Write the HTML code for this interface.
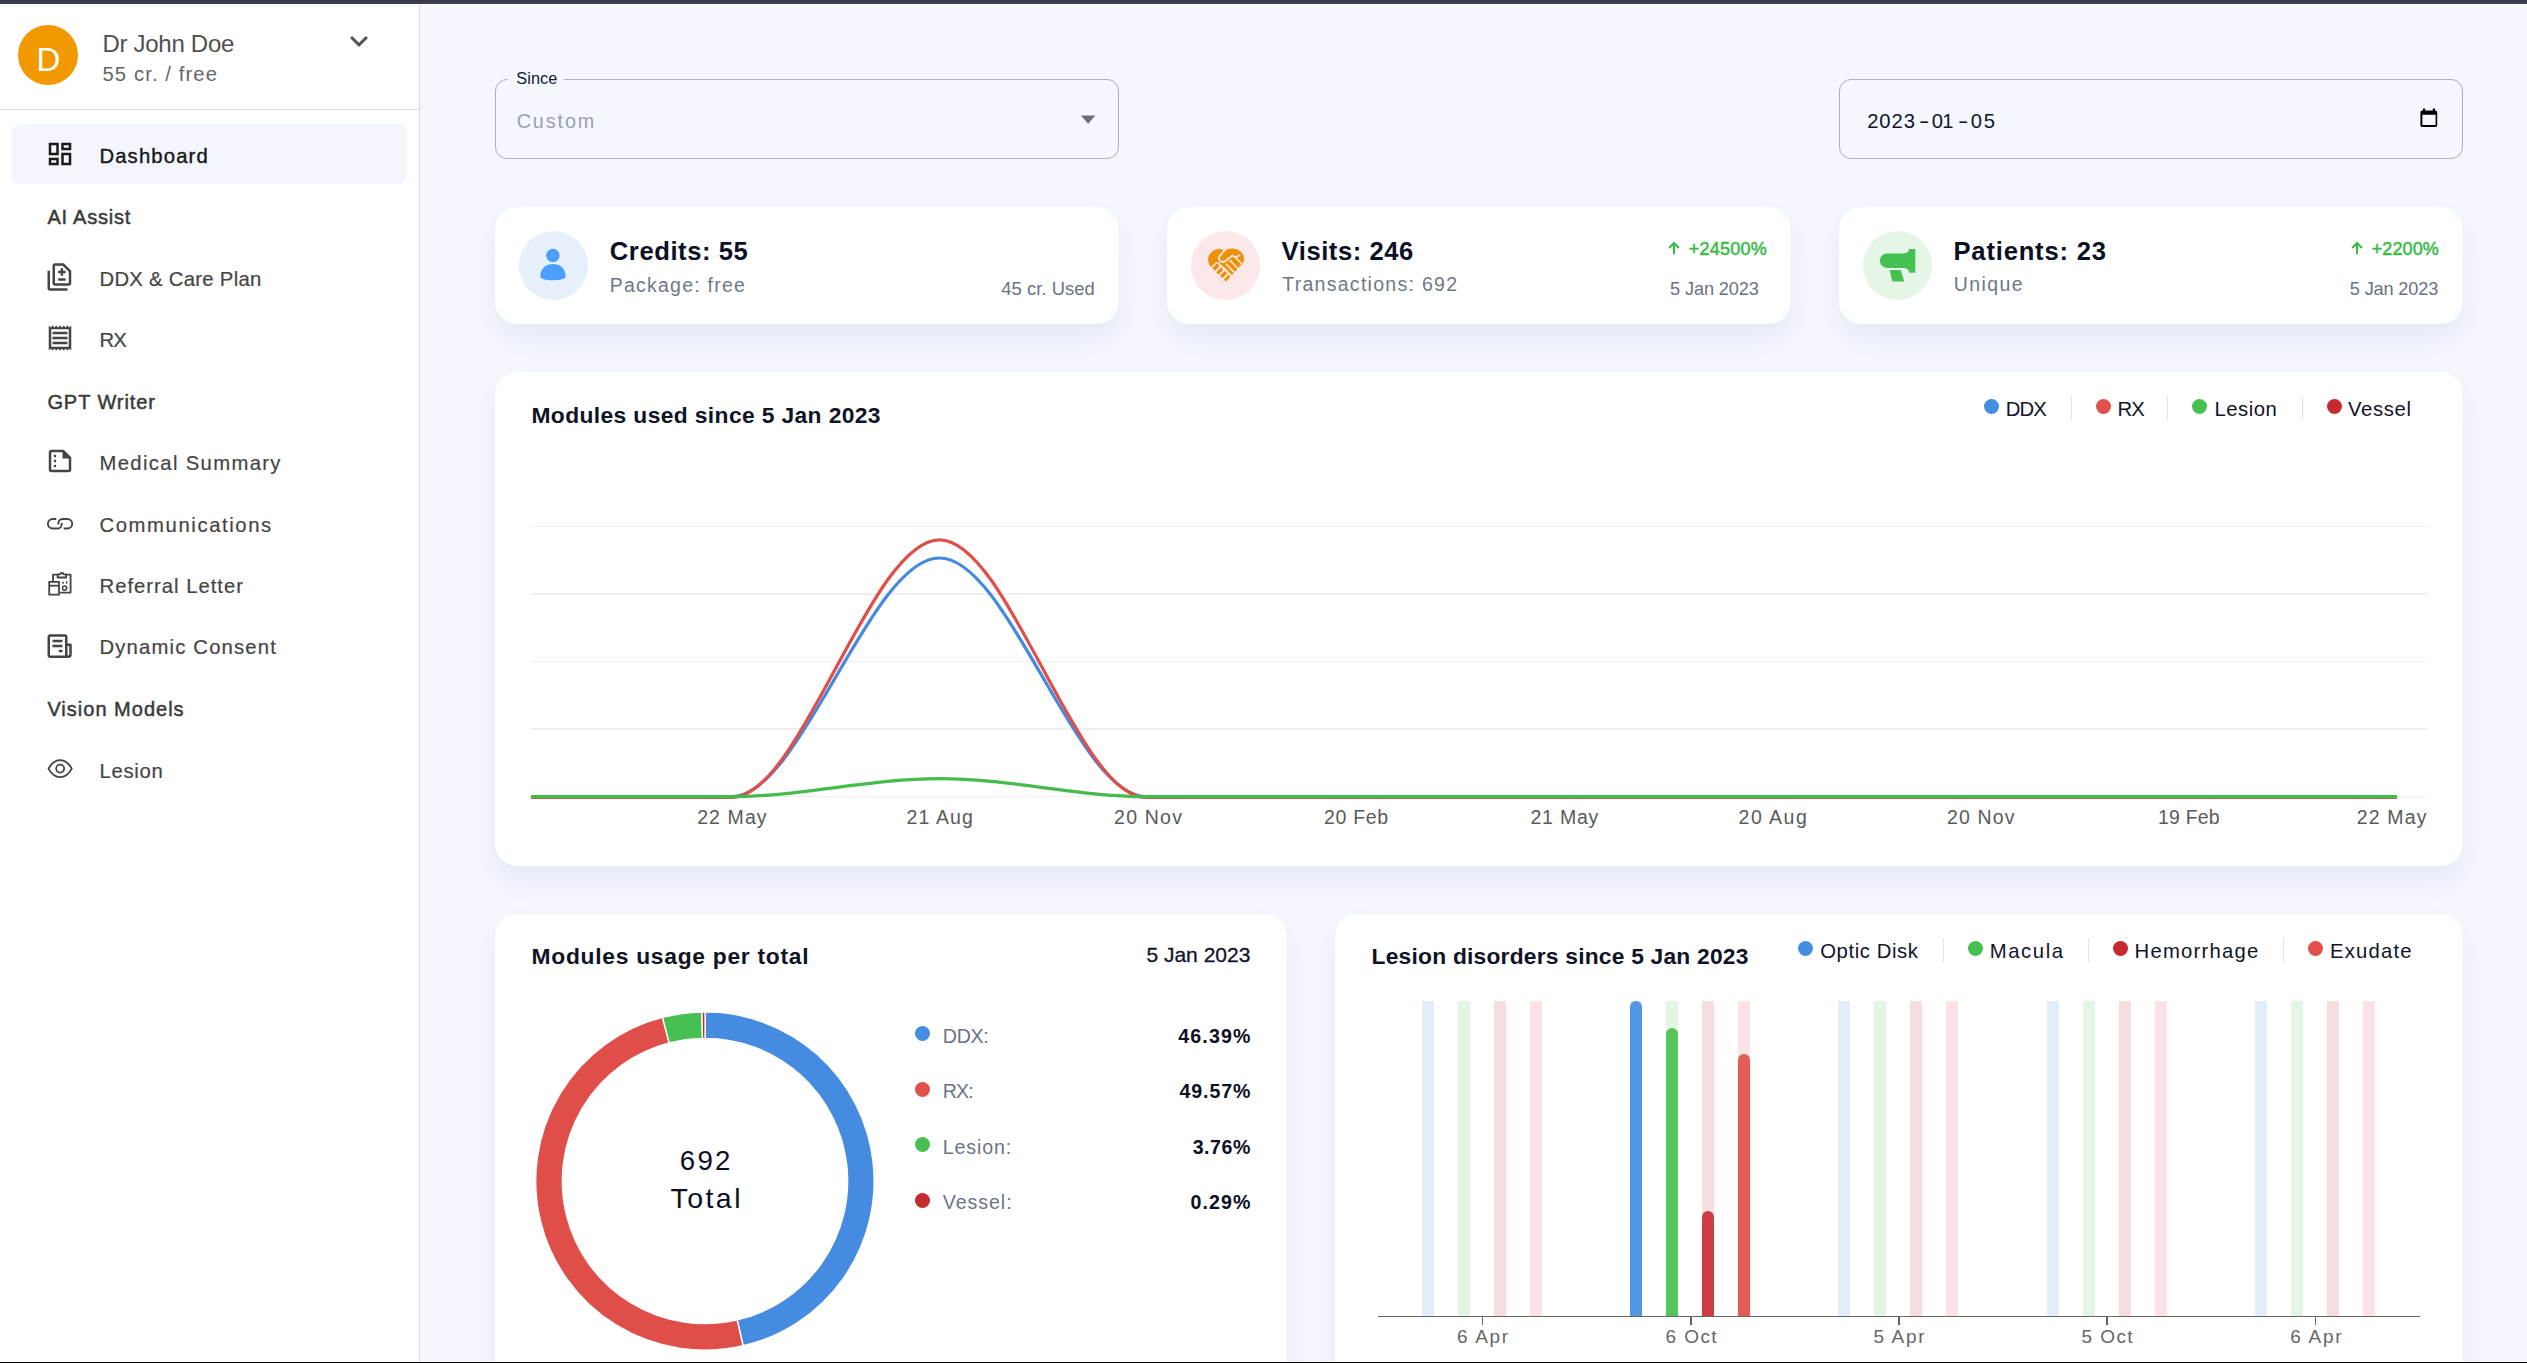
<!DOCTYPE html>
<html lang="en"><head><meta charset="utf-8"><title>Dashboard</title>
<style>
html,body{margin:0;padding:0;}
body{width:2527px;height:1363px;overflow:hidden;background:#f4f7fe;font-family:"Liberation Sans",sans-serif;}
#root{position:relative;width:2527px;height:1363px;overflow:hidden;background:#f4f7fe;}
#root div,#root svg{position:absolute;}
.t{white-space:pre;}
.card{background:#fff;border-radius:22.5px;box-shadow:0 14px 28px rgba(20,25,80,0.065);}
.dot{width:15px;height:15px;border-radius:50%;}
.sep{width:1.5px;height:24px;background:#e3e3e3;}
.grid{left:531px;width:1896px;height:1.5px;background:#efefef;}
.bb{width:12px;top:1001px;height:315px;}
.db{width:12px;border-radius:6px 6px 0 0;}

</style></head>
<body>
<div id="root">
<div style="left:0;top:0;width:2527px;height:5px;background:#fff"></div>
<div style="left:0;top:5px;width:419px;height:1358px;background:#fff"></div>
<div style="left:419px;top:4px;width:1px;height:1359px;background:#d9dae0"></div>
<div style="left:0;top:0;width:2527px;height:2px;background:#363a4e"></div>
<div style="left:0;top:2px;width:2527px;height:1px;background:#45464f"></div>
<div style="left:0;top:3px;width:2527px;height:1px;background:#383a42"></div>
<div style="left:18px;top:25px;width:60px;height:60px;border-radius:50%;background:#f29900"></div>
<svg style="left:341px;top:23px" width="36" height="36" viewBox="0 0 24 24"><path fill="#555" d="M16.59 8.59 12 13.17 7.41 8.59 6 10l6 6 6-6z"/></svg>
<div style="left:0;top:109px;width:419px;height:1px;background:#dcdcdc"></div>
<div style="left:12px;top:124px;width:395px;height:60px;border-radius:7px;background:#f4f6fd"></div>
<svg style="left:45px;top:139px" width="30" height="30" viewBox="0 0 24 24" fill="#1a1a1a"><path d="M19 5v2h-4V5h4M9 5v6H5V5h4m10 8v6h-4v-6h4M9 17v2H5v-2h4M21 3h-8v6h8V3zM11 3H3v10h8V3zm10 8h-8v10h8V11zm-10 4H3v6h8v-6z"/></svg>
<svg style="left:45px;top:261.6px" width="30" height="30" viewBox="0 0 24 24" fill="#444"><path d="M18 23H4c-1.1 0-2-.9-2-2V7h2v14h14v2zM14.5 7V5h-2v2h-2v2h2v2h2V9h2V7h-2zm2 6h-6v2h6v-2zM15 1H8c-1.1 0-1.99.9-1.99 2L6 17c0 1.1.89 2 1.99 2H19c1.1 0 2-.9 2-2V7l-6-6zm4 16H8V3h6.17L19 7.83V17z"/></svg>
<svg style="left:45px;top:322.5px" width="30" height="30" viewBox="0 0 24 24" fill="#444"><path d="M19.5 3.5 18 2l-1.5 1.5L15 2l-1.5 1.5L12 2l-1.5 1.5L9 2 7.5 3.5 6 2 4.5 3.5 3 2v20l1.5-1.5L6 22l1.5-1.5L9 22l1.5-1.5L12 22l1.5-1.5L15 22l1.5-1.5L18 22l1.5-1.5L21 22V2l-1.5 1.5zM19 19.09H5V4.91h14v14.18zM6 15h12v2H6zm0-4h12v2H6zm0-4h12v2H6z"/></svg>
<svg style="left:45px;top:446px" width="30" height="30" viewBox="0 0 24 24" fill="#444"><path d="M15 3H5c-1.1 0-1.99.9-1.99 2L3 19c0 1.1.89 2 1.99 2H19c1.1 0 2-.9 2-2V9l-6-6zM5 19V5h9v5h5v9H5zM9 8c0 .55-.45 1-1 1s-1-.45-1-1 .45-1 1-1 1 .45 1 1zm0 4c0 .55-.45 1-1 1s-1-.45-1-1 .45-1 1-1 1 .45 1 1zm0 4c0 .55-.45 1-1 1s-1-.45-1-1 .45-1 1-1 1 .45 1 1z"/></svg>
<svg style="left:45px;top:631px" width="30" height="30" viewBox="0 0 24 24" fill="#444"><g fill="none" stroke="#444" stroke-width="2" stroke-linejoin="round"><path d="M17.5 20.5H4.2a1.2 1.2 0 0 1-1.2-1.2V4.7a1.2 1.2 0 0 1 1.2-1.2h11.6A1.2 1.2 0 0 1 17 4.7v14.1a1.7 1.7 0 0 0 3.4 0V11H17"/></g><rect x="6" y="7" width="8" height="2"/><rect x="6" y="11" width="8" height="2"/><rect x="11" y="15" width="3" height="2"/></svg>
<div style="left:495px;top:79px;width:622px;height:77.5px;border:1px solid #aeb0b8;border-radius:12px"></div>
<div style="left:508px;top:78px;width:55.5px;height:4px;background:#f4f7fe"></div>
<svg style="left:1076px;top:111px" width="24" height="16" viewBox="0 0 24 16"><path fill="#6f6f73" d="M4.9 4.6h14.5l-7.25 8.1z"/></svg>
<div style="left:1839px;top:79px;width:622px;height:77.5px;border:1px solid #aeb0b8;border-radius:12px"></div>

<svg style="left:2418px;top:106px" width="22" height="24" viewBox="0 0 22 24"><path fill="#000" fill-rule="evenodd" d="M5 2.6h2.2v2H14.8v-2H17v2h0.4a1.8 1.8 0 0 1 1.8 1.800v12.900a1.800 1.800 0 0 1-1.800 1.800H4.200a1.800 1.800 0 0 1-1.800-1.800V6.400a1.800 1.800 0 0 1 1.800-1.800H5zM4.400 8.800v10.200h13.200V8.800z"/></svg>
<div class="card" style="left:495px;top:207px;width:624px;height:117px"></div>
<div class="card" style="left:1167px;top:207px;width:624px;height:117px"></div>
<div class="card" style="left:1839px;top:207px;width:624px;height:117px"></div>
<div style="left:519px;top:231px;width:69px;height:69px;border-radius:50%;background:#e6f0fb"></div>
<svg style="left:519px;top:231px" width="69" height="69" viewBox="519 231 69 69"><circle cx="552.9" cy="255.5" r="6.7" fill="#4d9fff"/><path fill="#4d9fff" d="M540.3 276.3C540.6 268.500 545.600 264.100 552.950 264.100C560.300 264.100 565.300 268.500 565.600 276.300C565.700 279.200 560.200 280.300 552.950 280.300C545.700 280.300 540.200 279.200 540.300 276.300Z"/></svg>
<div style="left:1191px;top:231px;width:69px;height:69px;border-radius:50%;background:#fce8e8"></div>
<svg style="left:1200px;top:240px" width="52" height="50" viewBox="0 0 1418 1363"><path fill="#ed9106" d="M705 1140L300 735C190 600 190 430 330 320C430 235 570 215 660 300C760 215 960 200 1090 300C1230 410 1230 560 1150 650Z"/><g fill="none" stroke="#fce8e8" stroke-linecap="round" stroke-linejoin="round"><path stroke-width="50" d="M672 285L540 430C490 490 520 580 600 600C660 610 700 570 740 540L880 425L960 470L1075 420"/><path stroke-width="42" d="M985 490L1135 645"/><path stroke-width="42" d="M820 560L1060 810"/><path stroke-width="42" d="M720 660L960 910"/><path stroke-width="62" d="M560 700L640 765L880 1010"/><path stroke-width="52" d="M370 920L545 735"/><path stroke-width="52" d="M470 1020L645 835"/><path stroke-width="52" d="M580 1110L750 935"/><path stroke-width="44" d="M290 780L430 640C470 610 520 630 550 700"/><path stroke-width="70" d="M1140 740L800 1100"/></g></svg>
<div style="left:1863px;top:231px;width:69px;height:69px;border-radius:50%;background:#e5f6e6"></div>
<svg style="left:1870px;top:240px" width="56" height="50" viewBox="0 0 1527 1363"><path fill="#45c151" d="M1065 245H1235V895H1065C1065 800 1000 760 900 760H467A197.500 197.500 0 0 1 467 365H900C1000 365 1065 320 1065 245Z"/><path fill="#45c151" d="M535 820H835L935 1130H610Z"/></svg>
<svg style="left:1666.4px;top:240px" width="16" height="16" viewBox="0 0 16 16"><g fill="none" stroke="#3dbb4a" stroke-width="2.100" stroke-linecap="butt"><path d="M8 14.300V3.200"/><path d="M3.100 7.900L8 3L12.900 7.900"/></g></svg>
<svg style="left:2349.4px;top:240px" width="16" height="16" viewBox="0 0 16 16"><g fill="none" stroke="#3dbb4a" stroke-width="2.100" stroke-linecap="butt"><path d="M8 14.300V3.200"/><path d="M3.100 7.900L8 3L12.900 7.900"/></g></svg>
<div class="card" style="left:495px;top:372px;width:1968px;height:493.500px"></div>
<div class="grid" style="top:525.75px"></div>
<div class="grid" style="top:593.25px"></div>
<div class="grid" style="top:660.75px"></div>
<div class="grid" style="top:728.25px"></div>
<div class="grid" style="top:795.75px"></div>
<div class="dot" style="left:1984.1px;top:398.8px;background:#458de0"></div>
<div class="dot" style="left:2095.9px;top:398.8px;background:#e2504c"></div>
<div class="dot" style="left:2191.9px;top:398.8px;background:#46c050"></div>
<div class="dot" style="left:2327.0px;top:398.8px;background:#c62a2f"></div>
<div class="sep" style="left:2070.55px;top:396px"></div>
<div class="sep" style="left:2166.65px;top:396px"></div>
<div class="sep" style="left:2301.65px;top:396px"></div>
<svg style="left:0;top:500px" width="2527" height="320" viewBox="0 500 2527 320"><g fill="none" stroke-width="3.2" stroke-linejoin="round"><path stroke="#4489e0" d="M531 796.6L731.7 796.6C801.0 796.6 870.2 558 939.5 558C1008.3 558 1077.2 796.6 1146 796.6L2397 796.6"/><path stroke="#e04e4a" d="M531 797.4L731.7 797.4C801.0 797.4 870.2 539.8 939.5 539.8C1008.3 539.8 1077.2 797.4 1146 797.4L2397 797.4"/><path stroke="#44bb4c" d="M531 796.6L731.7 796.6C801.0 796.6 870.2 778.6 939.5 778.6C1008.3 778.6 1077.2 796.6 1146 796.6L2397 796.6"/></g></svg>
<div class="card" style="left:495px;top:914px;width:792px;height:520px"></div>
<svg style="left:520px;top:1000px" width="380" height="363" viewBox="520 1000 380 363"><path fill="#458be0" stroke="#fff" stroke-width="1.4" d="M705.05 1011.90A169.1 169.1 0 0 1 743.13 1345.76L737.16 1319.94A142.6 142.6 0 0 0 705.05 1038.40Z"/><path fill="#e04e4a" stroke="#fff" stroke-width="1.4" d="M743.13 1345.76A169.1 169.1 0 0 1 662.49 1017.34L669.16 1042.99A142.6 142.6 0 0 0 737.16 1319.94Z"/><path fill="#46c050" stroke="#fff" stroke-width="1.4" d="M662.49 1017.34A169.1 169.1 0 0 1 701.97 1011.93L702.45 1038.42A142.6 142.6 0 0 0 669.16 1042.99Z"/><path fill="#c62a2f" stroke="#fff" stroke-width="1.4" d="M701.97 1011.93A169.1 169.1 0 0 1 705.05 1011.90L705.05 1038.40A142.6 142.6 0 0 0 702.45 1038.42Z"/></svg>
<div class="dot" style="left:915px;top:1025.9px;background:#458de0"></div>
<div class="dot" style="left:915px;top:1081.9px;background:#e2504c"></div>
<div class="dot" style="left:915px;top:1137.1px;background:#46c050"></div>
<div class="dot" style="left:915px;top:1193.0px;background:#c62a2f"></div>
<div class="card" style="left:1335px;top:914px;width:1128px;height:520px"></div>
<div class="dot" style="left:1798.1px;top:941.0px;background:#458de0"></div>
<div class="dot" style="left:1967.9px;top:941.0px;background:#46c050"></div>
<div class="dot" style="left:2112.8px;top:941.0px;background:#c62a2f"></div>
<div class="dot" style="left:2307.8px;top:941.0px;background:#e2504c"></div>
<div class="sep" style="left:1942.65px;top:938.300px"></div>
<div class="sep" style="left:2087.55px;top:938.300px"></div>
<div class="sep" style="left:2282.55px;top:938.300px"></div>
<div class="bb" style="left:1422.0px;background:#e3edf9"></div>
<div class="bb" style="left:1458.0px;background:#e3f5e4"></div>
<div class="bb" style="left:1494.0px;background:#f7dede"></div>
<div class="bb" style="left:1530.0px;background:#fce3e3"></div>
<div class="bb" style="left:1630.2px;background:#e3edf9"></div>
<div class="bb" style="left:1666.2px;background:#e3f5e4"></div>
<div class="bb" style="left:1702.2px;background:#f7dede"></div>
<div class="bb" style="left:1738.2px;background:#fce3e3"></div>
<div class="bb" style="left:1838.4px;background:#e3edf9"></div>
<div class="bb" style="left:1874.4px;background:#e3f5e4"></div>
<div class="bb" style="left:1910.4px;background:#f7dede"></div>
<div class="bb" style="left:1946.4px;background:#fce3e3"></div>
<div class="bb" style="left:2046.6px;background:#e3edf9"></div>
<div class="bb" style="left:2082.6px;background:#e3f5e4"></div>
<div class="bb" style="left:2118.6px;background:#f7dede"></div>
<div class="bb" style="left:2154.6px;background:#fce3e3"></div>
<div class="bb" style="left:2254.8px;background:#e3edf9"></div>
<div class="bb" style="left:2290.8px;background:#e3f5e4"></div>
<div class="bb" style="left:2326.8px;background:#f7dede"></div>
<div class="bb" style="left:2362.8px;background:#fce3e3"></div>
<div class="db" style="left:1630.2px;top:1001px;height:315.0px;background:#5596e2"></div>
<div class="db" style="left:1666.2px;top:1027.8px;height:288.2px;background:#56c65c"></div>
<div class="db" style="left:1702.2px;top:1211.3px;height:104.7px;background:#cc3c42"></div>
<div class="db" style="left:1738.2px;top:1053.9px;height:262.1px;background:#e45c58"></div>
<div style="left:1378.300px;top:1315.700px;width:1041.500px;height:1.600px;background:#666"></div>
<div style="left:1481.7px;top:1316px;width:1.600px;height:9px;background:#666"></div>
<div style="left:1690.0px;top:1316px;width:1.600px;height:9px;background:#666"></div>
<div style="left:1898.1000000000001px;top:1316px;width:1.600px;height:9px;background:#666"></div>
<div style="left:2106.2999999999997px;top:1316px;width:1.600px;height:9px;background:#666"></div>
<div style="left:2314.6px;top:1316px;width:1.600px;height:9px;background:#666"></div>
<div style="left:0;top:1361.500px;width:2527px;height:1.500px;background:#000"></div>
<svg style="left:40px;top:505px" width="40" height="40" viewBox="40 505 40 40"><g fill="none" stroke="#444" stroke-width="1.85" stroke-linecap="butt"><path d="M56.300 519H52.650A4.750 4.750 0 0 0 52.650 528.500H57.400A4.300 4.300 0 0 0 61.700 524.200V523"/><path d="M63.700 528.500H67.450A4.750 4.750 0 0 0 67.450 519H62.600A4.300 4.300 0 0 0 58.300 523.300V524.500"/></g></svg>
<svg style="left:40px;top:565px" width="40" height="40" viewBox="40 565 40 40"><g fill="none" stroke="#444" stroke-width="1.800" stroke-linejoin="round"><path d="M53 581V574.700H57.600"/><path d="M66.200 574.700H70.600V592.600H60.200"/><path d="M57.600 577.500V574.300H60.100C60.300 572.600 63.500 572.600 63.700 574.300H66.200V577.500Z"/><path d="M49.200 581.800H59V594.700H49.200Z"/><path d="M49.200 585.700H59"/><circle cx="64.600" cy="588.100" r="2.100" stroke-width="1.500"/></g><rect x="62.200" y="581.900" width="1.700" height="1.700" fill="#444"/><rect x="66" y="581.200" width="1.300" height="2.500" fill="#444"/></svg>
<svg style="left:40px;top:750px" width="40" height="40" viewBox="40 750 40 40"><g fill="none" stroke="#444" stroke-width="1.800" stroke-linejoin="round"><path d="M48.500 768.600C52 762.300 56 760.100 60.150 760.100C64.300 760.100 68.300 762.300 71.800 768.600C68.300 774.900 64.300 777.100 60.150 777.100C56 777.100 52 774.900 48.500 768.600Z"/><circle cx="60.150" cy="768.600" r="4"/></g></svg>
<div class="t" style="left:1918.60px;top:111px;font-size:20px;line-height:20px;color:#10142a;transform:scaleX(1.55);transform-origin:0 0">-</div>
<div class="t" style="left:1957.50px;top:111px;font-size:20px;line-height:20px;color:#10142a;transform:scaleX(1.55);transform-origin:0 0">-</div>
<div class="t" style="top:43.00px;font-size:33px;line-height:33px;color:#ffffff;left:-51.70px;width:200px;text-align:center;">D</div>
<div class="t" style="top:32.00px;font-size:24px;line-height:24px;color:#505050;letter-spacing:-0.293px;left:102.50px;">Dr John Doe</div>
<div class="t" style="top:64.00px;font-size:20.3px;line-height:20.3px;color:#666666;letter-spacing:1.086px;left:102.50px;">55 cr. / free</div>
<div class="t" style="top:146.00px;font-size:20.3px;line-height:20.3px;color:#151515;letter-spacing:1.148px;-webkit-text-stroke:0.35px #151515;left:99.40px;">Dashboard</div>
<div class="t" style="top:207.00px;font-size:20px;line-height:20px;color:#3a3a3a;letter-spacing:0.787px;-webkit-text-stroke:0.5px #3a3a3a;left:47.40px;">AI Assist</div>
<div class="t" style="top:269.00px;font-size:20.3px;line-height:20.3px;color:#454545;letter-spacing:0.285px;-webkit-text-stroke:0.2px #454545;left:99.50px;">DDX &amp; Care Plan</div>
<div class="t" style="top:330.00px;font-size:20.3px;line-height:20.3px;color:#454545;letter-spacing:-0.900px;-webkit-text-stroke:0.2px #454545;left:99.50px;">RX</div>
<div class="t" style="top:392.00px;font-size:20px;line-height:20px;color:#3a3a3a;letter-spacing:0.924px;-webkit-text-stroke:0.5px #3a3a3a;left:47.40px;">GPT Writer</div>
<div class="t" style="top:453.00px;font-size:20.3px;line-height:20.3px;color:#454545;letter-spacing:1.336px;-webkit-text-stroke:0.2px #454545;left:99.50px;">Medical Summary</div>
<div class="t" style="top:515.00px;font-size:20.3px;line-height:20.3px;color:#454545;letter-spacing:1.589px;-webkit-text-stroke:0.2px #454545;left:99.50px;">Communications</div>
<div class="t" style="top:576.00px;font-size:20.3px;line-height:20.3px;color:#454545;letter-spacing:0.990px;-webkit-text-stroke:0.2px #454545;left:99.50px;">Referral Letter</div>
<div class="t" style="top:637.00px;font-size:20.3px;line-height:20.3px;color:#454545;letter-spacing:1.167px;-webkit-text-stroke:0.2px #454545;left:99.50px;">Dynamic Consent</div>
<div class="t" style="top:699.00px;font-size:20px;line-height:20px;color:#3a3a3a;letter-spacing:1.005px;-webkit-text-stroke:0.5px #3a3a3a;left:47.40px;">Vision Models</div>
<div class="t" style="top:761.00px;font-size:20.3px;line-height:20.3px;color:#454545;letter-spacing:0.687px;-webkit-text-stroke:0.2px #454545;left:99.50px;">Lesion</div>
<div class="t" style="top:70.00px;font-size:16.3px;line-height:16.3px;color:#111936;letter-spacing:0.066px;left:516.30px;">Since</div>
<div class="t" style="top:112.00px;font-size:19.8px;line-height:19.8px;color:#9a9fae;letter-spacing:1.889px;left:516.70px;">Custom</div>
<div class="t" style="top:111.00px;font-size:20.2px;line-height:20.2px;color:#10142a;letter-spacing:0.959px;left:1867.20px;">2023</div>
<div class="t" style="top:111.00px;font-size:20.2px;line-height:20.2px;color:#10142a;letter-spacing:-0.669px;left:1931.80px;">01</div>
<div class="t" style="top:111.00px;font-size:20.2px;line-height:20.2px;color:#10142a;letter-spacing:1.931px;left:1970.70px;">05</div>
<div class="t" style="top:239.00px;font-size:25.6px;line-height:25.6px;color:#0c1024;font-weight:700;letter-spacing:0.572px;left:609.80px;">Credits: 55</div>
<div class="t" style="top:276.00px;font-size:19.5px;line-height:19.5px;color:#707887;letter-spacing:1.223px;left:609.80px;">Package: free</div>
<div class="t" style="top:280.00px;font-size:18.4px;line-height:18.4px;color:#6b7280;letter-spacing:0.057px;left:1001.20px;">45 cr. Used</div>
<div class="t" style="top:239.00px;font-size:25.6px;line-height:25.6px;color:#0c1024;font-weight:700;letter-spacing:0.553px;left:1281.60px;">Visits: 246</div>
<div class="t" style="top:275.00px;font-size:19.5px;line-height:19.5px;color:#707887;letter-spacing:1.282px;left:1282.20px;">Transactions: 692</div>
<div class="t" style="top:240.00px;font-size:18px;line-height:18px;color:#3dbb4a;letter-spacing:0.237px;-webkit-text-stroke:0.55px #3dbb4a;left:1688.70px;">+24500%</div>
<div class="t" style="top:280.00px;font-size:18.2px;line-height:18.2px;color:#6b7280;letter-spacing:-0.113px;left:1670.00px;">5 Jan 2023</div>
<div class="t" style="top:239.00px;font-size:25.6px;line-height:25.6px;color:#0c1024;font-weight:700;letter-spacing:0.803px;left:1953.50px;">Patients: 23</div>
<div class="t" style="top:275.00px;font-size:19.5px;line-height:19.5px;color:#707887;letter-spacing:1.421px;left:1953.80px;">Unique</div>
<div class="t" style="top:240.00px;font-size:18px;line-height:18px;color:#3dbb4a;letter-spacing:0.107px;-webkit-text-stroke:0.55px #3dbb4a;left:2371.70px;">+2200%</div>
<div class="t" style="top:280.00px;font-size:18.2px;line-height:18.2px;color:#6b7280;letter-spacing:-0.168px;left:2349.80px;">5 Jan 2023</div>
<div class="t" style="top:404.00px;font-size:22.8px;line-height:22.8px;color:#0f1324;font-weight:700;letter-spacing:0.382px;left:531.50px;">Modules used since 5 Jan 2023</div>
<div class="t" style="top:399.00px;font-size:20.3px;line-height:20.3px;color:#10142a;letter-spacing:-0.900px;left:2005.70px;">DDX</div>
<div class="t" style="top:399.00px;font-size:20.3px;line-height:20.3px;color:#10142a;letter-spacing:-0.900px;left:2117.40px;">RX</div>
<div class="t" style="top:399.00px;font-size:20.3px;line-height:20.3px;color:#10142a;letter-spacing:0.527px;left:2214.50px;">Lesion</div>
<div class="t" style="top:399.00px;font-size:20.3px;line-height:20.3px;color:#10142a;letter-spacing:0.687px;left:2347.90px;">Vessel</div>
<div class="t" style="top:808.00px;font-size:19.5px;line-height:19.5px;color:#5a5a5a;letter-spacing:1.089px;left:697.20px;">22 May</div>
<div class="t" style="top:808.00px;font-size:19.5px;line-height:19.5px;color:#5a5a5a;letter-spacing:1.093px;left:906.60px;">21 Aug</div>
<div class="t" style="top:808.00px;font-size:19.5px;line-height:19.5px;color:#5a5a5a;letter-spacing:1.201px;left:1114.10px;">20 Nov</div>
<div class="t" style="top:808.00px;font-size:19.5px;line-height:19.5px;color:#5a5a5a;letter-spacing:0.696px;left:1324.00px;">20 Feb</div>
<div class="t" style="top:808.00px;font-size:19.5px;line-height:19.5px;color:#5a5a5a;letter-spacing:0.769px;left:1530.50px;">21 May</div>
<div class="t" style="top:808.00px;font-size:19.5px;line-height:19.5px;color:#5a5a5a;letter-spacing:1.493px;left:1738.60px;">20 Aug</div>
<div class="t" style="top:808.00px;font-size:19.5px;line-height:19.5px;color:#5a5a5a;letter-spacing:1.141px;left:1947.00px;">20 Nov</div>
<div class="t" style="top:808.00px;font-size:19.5px;line-height:19.5px;color:#5a5a5a;letter-spacing:0.196px;left:2158.00px;">19 Feb</div>
<div class="t" style="top:808.00px;font-size:19.5px;line-height:19.5px;color:#5a5a5a;letter-spacing:1.189px;left:2356.70px;">22 May</div>
<div class="t" style="top:945.00px;font-size:22.8px;line-height:22.8px;color:#0f1324;font-weight:700;letter-spacing:0.729px;left:531.60px;">Modules usage per total</div>
<div class="t" style="top:944.00px;font-size:21px;line-height:21px;color:#10142a;letter-spacing:0.007px;-webkit-text-stroke:0.3px #10142a;left:1146.40px;">5 Jan 2023</div>
<div class="t" style="top:1147.00px;font-size:27.6px;line-height:27.6px;color:#0c1024;letter-spacing:2.277px;left:679.80px;">692</div>
<div class="t" style="top:1184.00px;font-size:28.5px;line-height:28.5px;color:#0c1024;letter-spacing:2.449px;left:670.50px;">Total</div>
<div class="t" style="top:1027.00px;font-size:19.6px;line-height:19.6px;color:#6b7388;letter-spacing:-0.276px;left:942.80px;">DDX:</div>
<div class="t" style="top:1082.00px;font-size:19.6px;line-height:19.6px;color:#6b7388;letter-spacing:-0.886px;left:942.80px;">RX:</div>
<div class="t" style="top:1138.00px;font-size:19.6px;line-height:19.6px;color:#6b7388;letter-spacing:0.885px;left:942.80px;">Lesion:</div>
<div class="t" style="top:1193.00px;font-size:19.6px;line-height:19.6px;color:#6b7388;letter-spacing:0.935px;left:942.80px;">Vessel:</div>
<div class="t" style="top:1027.00px;font-size:19.6px;line-height:19.6px;color:#0c1024;font-weight:700;letter-spacing:1.126px;left:1178.30px;">46.39%</div>
<div class="t" style="top:1082.00px;font-size:19.6px;line-height:19.6px;color:#0c1024;font-weight:700;letter-spacing:0.886px;left:1179.50px;">49.57%</div>
<div class="t" style="top:1138.00px;font-size:19.6px;line-height:19.6px;color:#0c1024;font-weight:700;letter-spacing:0.534px;left:1192.70px;">3.76%</div>
<div class="t" style="top:1193.00px;font-size:19.6px;line-height:19.6px;color:#0c1024;font-weight:700;letter-spacing:1.084px;left:1190.50px;">0.29%</div>
<div class="t" style="top:945.00px;font-size:22.8px;line-height:22.8px;color:#0f1324;font-weight:700;letter-spacing:0.213px;left:1371.60px;">Lesion disorders since 5 Jan 2023</div>
<div class="t" style="top:941.00px;font-size:20.3px;line-height:20.3px;color:#10142a;letter-spacing:0.599px;left:1820.20px;">Optic Disk</div>
<div class="t" style="top:941.00px;font-size:20.3px;line-height:20.3px;color:#10142a;letter-spacing:1.602px;left:1989.70px;">Macula</div>
<div class="t" style="top:941.00px;font-size:20.3px;line-height:20.3px;color:#10142a;letter-spacing:1.230px;left:2134.60px;">Hemorrhage</div>
<div class="t" style="top:941.00px;font-size:20.3px;line-height:20.3px;color:#10142a;letter-spacing:1.213px;left:2329.90px;">Exudate</div>
<div class="t" style="top:1327.00px;font-size:19px;line-height:19px;color:#666666;letter-spacing:1.681px;left:1457.00px;">6 Apr</div>
<div class="t" style="top:1327.00px;font-size:19px;line-height:19px;color:#666666;letter-spacing:1.423px;left:1665.50px;">6 Oct</div>
<div class="t" style="top:1327.00px;font-size:19px;line-height:19px;color:#666666;letter-spacing:1.681px;left:1873.40px;">5 Apr</div>
<div class="t" style="top:1327.00px;font-size:19px;line-height:19px;color:#666666;letter-spacing:1.423px;left:2081.50px;">5 Oct</div>
<div class="t" style="top:1327.00px;font-size:19px;line-height:19px;color:#666666;letter-spacing:1.781px;left:2290.20px;">6 Apr</div>
</div>
</body></html>
